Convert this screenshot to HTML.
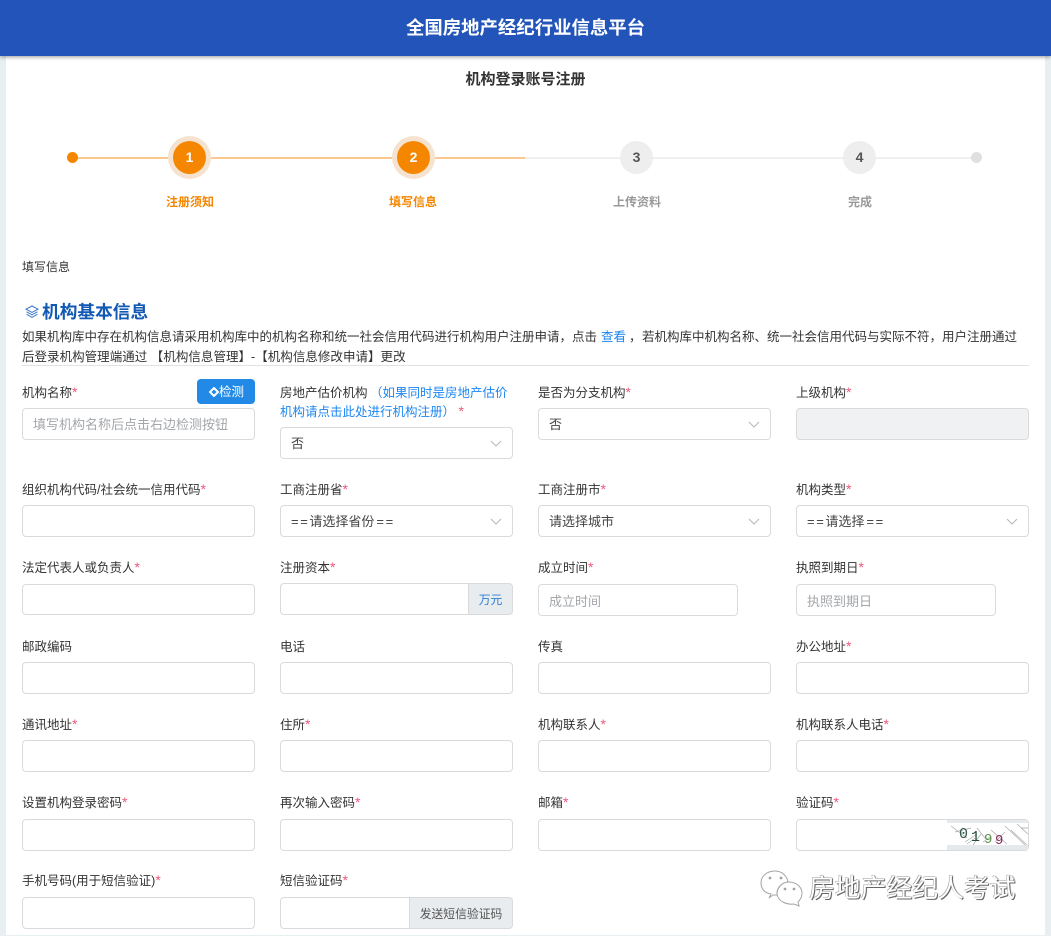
<!DOCTYPE html>
<html lang="zh-CN"><head><meta charset="utf-8"><title>机构登录账号注册</title>
<style>
*{box-sizing:border-box}
html,body{margin:0;padding:0}
body{width:1051px;height:936px;overflow:hidden;position:relative;background:#e8eff2;font-family:"Liberation Sans","Noto Sans CJK SC",sans-serif;color:#333}
.a{position:absolute;white-space:nowrap}
#main{left:6px;top:0;width:1039px;height:935px;background:#fff}
#hdr{left:0;top:0;width:1051px;height:56px;background:#2254b9;box-shadow:0 1px 4px rgba(0,0,0,.4);color:#fff;font-size:18.4px;font-weight:700;text-align:center;line-height:56px}
.l{font-size:12.5px;line-height:16px;color:#333;margin-top:1px}
.l i,.st{color:#f0567a;font-style:normal;font-size:14px;line-height:0}
.i{height:32px;width:233px;background:#fff;border:1px solid #d9dadc;border-radius:4px;font-size:13px;line-height:32px;padding-left:10px;color:#444}
.ph{color:#a3a6aa}
.s svg{position:absolute;right:10px;top:12px}
.c{border-radius:50%}
.n{font-size:14px;font-weight:700;text-align:center}
.t{font-size:12px;font-weight:700;width:80px;text-align:center;line-height:16px}
.on{color:#f58600}.off{color:#999}
.addon{background:#e9ecef;border:1px solid #d9dadc;border-radius:0 4px 4px 0;text-align:center;font-size:11.8px;line-height:32px;height:32px}
.d{font-size:12.5px;line-height:19px;color:#333}
.e{letter-spacing:1.6px}
</style></head><body>
<div class="a" id="main"></div>
<div class="a" id="hdr">全国房地产经纪行业信息平台</div>
<div class="a" style="left:0;top:72px;width:1051px;text-align:center;font-size:15px;font-weight:700;line-height:16px;color:#333">机构登录账号注册</div>

<div class="a" style="left:72px;top:157px;width:453px;height:2px;background:#fbc88f"></div>
<div class="a" style="left:525px;top:157px;width:452px;height:2px;background:#f0f0f0"></div>
<div class="a c" style="left:67px;top:152px;width:11px;height:11px;background:#f58600"></div>
<div class="a c" style="left:971px;top:152px;width:11px;height:11px;background:#e0e0e0"></div>
<div class="a c" style="left:168px;top:136px;width:43px;height:43px;background:#f6e3cf"></div>
<div class="a c n" style="left:173px;top:141px;width:33px;height:33px;background:#f58600;color:#fff;line-height:33px">1</div>
<div class="a c" style="left:392px;top:136px;width:43px;height:43px;background:#f6e3cf"></div>
<div class="a c n" style="left:397px;top:141px;width:33px;height:33px;background:#f58600;color:#fff;line-height:33px">2</div>
<div class="a c n" style="left:620px;top:141px;width:33px;height:33px;background:#eee;color:#555;line-height:33px">3</div>
<div class="a c n" style="left:843px;top:141px;width:33px;height:33px;background:#eee;color:#555;line-height:33px">4</div>
<div class="a t on" style="left:150px;top:194px">注册须知</div>
<div class="a t on" style="left:373px;top:194px">填写信息</div>
<div class="a t off" style="left:597px;top:194px">上传资料</div>
<div class="a t off" style="left:820px;top:194px">完成</div>

<div class="a" style="left:22px;top:259px;font-size:12px;line-height:16px;color:#333">填写信息</div>
<svg class="a" style="left:25px;top:305px" width="14" height="14" viewBox="0 0 14 14" fill="none" stroke="#3f78c9" stroke-width="1"><path d="M7 1 13 4.2 7 7.4 1 4.2Z"/><path d="M1.5 6.8 7 9.8 12.5 6.8"/><path d="M1.5 9.2 7 12.4 12.5 9.2"/></svg>
<div class="a" style="left:42px;top:301px;font-size:17.7px;font-weight:700;line-height:22px;color:#1259b4">机构基本信息</div>
<div class="a d" style="left:22px;top:328px">如果机构库中存在机构信息请采用机构库中的机构名称和统一社会信用代码进行机构用户注册申请，点击</div>
<div class="a d" style="left:601px;top:328px;color:#1a84f0">查看</div>
<div class="a d" style="left:629px;top:328px">，</div>
<div class="a d" style="left:642px;top:328px">若机构库中机构名称、统一社会信用代码与实际不符，用户注册通过</div>
<div class="a d" style="left:22px;top:348px;letter-spacing:.03px">后登录机构管理端通过 【机构信息管理】-【机构信息修改申请】更改</div>
<div class="a" style="left:22px;top:365px;width:1007px;height:1px;background:#e2e2e2"></div>

<!-- row 1 -->
<div class="a l" style="left:22px;top:384px">机构名称<i>*</i></div>
<div class="a" style="left:197px;top:379px;width:58px;height:25px;background:#228ae6;border-radius:4px;color:#fff;font-size:12.5px;line-height:26px;padding-left:12px"><svg style="position:absolute;left:12px;top:8px" width="10" height="10" viewBox="0 0 10 10" fill="none" stroke="#fff" stroke-width="2"><path d="M5 1 9 5 5 9 1 5Z"/></svg><span style="margin-left:10px">检测</span></div>
<div class="a i ph" style="left:22px;top:408px">填写机构名称后点击右边检测按钮</div>
<div class="a l" style="left:280px;top:384px">房地产估价机构 <span style="color:#1c86f2;margin-left:-1px">（如果同时是房地产估价</span></div>
<div class="a l" style="left:280px;top:403px"><span style="color:#1c86f2">机构请点击此处进行机构注册）</span> <i>*</i></div>
<div class="a i s" style="left:280px;top:427px">否<svg width="12" height="7" viewBox="0 0 12 7" fill="none" stroke="#b5b7ba" stroke-width="1"><path d="M1 1 6 6 11 1"/></svg></div>
<div class="a l" style="left:538px;top:384px">是否为分支机构<i>*</i></div>
<div class="a i s" style="left:538px;top:408px">否<svg width="12" height="7" viewBox="0 0 12 7" fill="none" stroke="#b5b7ba" stroke-width="1"><path d="M1 1 6 6 11 1"/></svg></div>
<div class="a l" style="left:796px;top:384px">上级机构<i>*</i></div>
<div class="a i" style="left:796px;top:408px;background:#f0f1f3"></div>

<!-- row 2 -->
<div class="a l" style="left:22px;top:481px">组织机构代码/社会统一信用代码<i>*</i></div>
<div class="a i" style="left:22px;top:505px"></div>
<div class="a l" style="left:280px;top:481px">工商注册省<i>*</i></div>
<div class="a i s" style="left:280px;top:505px"><span class="e">==</span>请选择省份<span class="e" style="margin-left:2px">==</span><svg width="12" height="7" viewBox="0 0 12 7" fill="none" stroke="#b5b7ba" stroke-width="1"><path d="M1 1 6 6 11 1"/></svg></div>
<div class="a l" style="left:538px;top:481px">工商注册市<i>*</i></div>
<div class="a i s" style="left:538px;top:505px">请选择城市<svg width="12" height="7" viewBox="0 0 12 7" fill="none" stroke="#b5b7ba" stroke-width="1"><path d="M1 1 6 6 11 1"/></svg></div>
<div class="a l" style="left:796px;top:481px">机构类型<i>*</i></div>
<div class="a i s" style="left:796px;top:505px"><span class="e">==</span>请选择<span class="e" style="margin-left:2px">==</span><svg width="12" height="7" viewBox="0 0 12 7" fill="none" stroke="#b5b7ba" stroke-width="1"><path d="M1 1 6 6 11 1"/></svg></div>

<!-- row 3 -->
<div class="a l" style="left:22px;top:559px">法定代表人或负责人<i>*</i></div>
<div class="a i" style="left:22px;top:584px;height:31px"></div>
<div class="a l" style="left:280px;top:559px">注册资本<i>*</i></div>
<div class="a i" style="left:280px;top:583px;width:189px;border-radius:4px 0 0 4px"></div>
<div class="a addon" style="left:468px;top:583px;width:45px;color:#2a7fd8">万元</div>
<div class="a l" style="left:538px;top:559px">成立时间<i>*</i></div>
<div class="a i ph" style="left:538px;top:584px;width:200px;line-height:33px">成立时间</div>
<div class="a l" style="left:796px;top:559px">执照到期日<i>*</i></div>
<div class="a i ph" style="left:796px;top:584px;width:200px;line-height:33px">执照到期日</div>

<!-- row 4 -->
<div class="a l" style="left:22px;top:638px">邮政编码</div>
<div class="a i" style="left:22px;top:662px"></div>
<div class="a l" style="left:280px;top:638px">电话</div>
<div class="a i" style="left:280px;top:662px"></div>
<div class="a l" style="left:538px;top:638px">传真</div>
<div class="a i" style="left:538px;top:662px"></div>
<div class="a l" style="left:796px;top:638px">办公地址<i>*</i></div>
<div class="a i" style="left:796px;top:662px"></div>

<!-- row 5 -->
<div class="a l" style="left:22px;top:716px">通讯地址<i>*</i></div>
<div class="a i" style="left:22px;top:740px"></div>
<div class="a l" style="left:280px;top:716px">住所<i>*</i></div>
<div class="a i" style="left:280px;top:740px"></div>
<div class="a l" style="left:538px;top:716px">机构联系人<i>*</i></div>
<div class="a i" style="left:538px;top:740px"></div>
<div class="a l" style="left:796px;top:716px">机构联系人电话<i>*</i></div>
<div class="a i" style="left:796px;top:740px"></div>

<!-- row 6 -->
<div class="a l" style="left:22px;top:794px">设置机构登录密码<i>*</i></div>
<div class="a i" style="left:22px;top:819px"></div>
<div class="a l" style="left:280px;top:794px">再次输入密码<i>*</i></div>
<div class="a i" style="left:280px;top:819px"></div>
<div class="a l" style="left:538px;top:794px">邮箱<i>*</i></div>
<div class="a i" style="left:538px;top:819px"></div>
<div class="a l" style="left:796px;top:794px">验证码<i>*</i></div>
<div class="a i" style="left:796px;top:819px"></div>
<svg class="a" style="left:947px;top:820px" width="81" height="30" viewBox="0 0 81 30">
<rect width="81" height="30" fill="#e6e9ec"/><rect y="3" width="81" height="22" fill="#fff"/>
<g stroke="#a4a9a6" stroke-width=".7" fill="none"><path d="M4 6 20 18M8 12 24 8M18 22 30 14M26 25 34 14M44 10 60 24M48 22 58 12M58 6 78 25M64 10 80 25M70 4 81 14M74 8 81 8M20 24 28 18M36 22 44 16M30 8 38 18"/></g>
<text x="12" y="18" font-family="Liberation Mono,monospace" font-size="15" fill="#2e5a45">0</text>
<text x="24" y="21" font-family="Liberation Mono,monospace" font-size="15" fill="#254a3a">1</text>
<text x="37" y="23" font-family="Liberation Mono,monospace" font-size="14" fill="#5d8f4d">9</text>
<text x="48" y="24" font-family="Liberation Mono,monospace" font-size="14" fill="#8a2a5a">9</text>
</svg>

<!-- row 7 -->
<div class="a l" style="left:22px;top:872px">手机号码(用于短信验证)<i>*</i></div>
<div class="a i" style="left:22px;top:897px"></div>
<div class="a l" style="left:280px;top:872px">短信验证码<i>*</i></div>
<div class="a i" style="left:280px;top:897px;width:130px;border-radius:4px 0 0 4px"></div>
<div class="a addon" style="left:409px;top:897px;width:104px;color:#555">发送短信验证码</div>

<!-- watermark -->
<svg class="a" style="left:758px;top:870px" width="46" height="38" viewBox="0 0 46 38" fill="#fff" stroke="#a5a5a5" stroke-width="1"><path d="M13 24C6 23 3 18 3 13 3 6 9 1 17 1 24 1 29 6 30 12 24 13 19 17 19 23L19 25 15 25 11 28Z"/><path d="M31 12C38 12 44 17 44 23 44 27 42 30 40 32L41 36 36 34C30 35 20 32 19 24 19 17 25 12 31 12Z"/><circle cx="12" cy="8" r=".9" fill="#888"/><circle cx="23" cy="8" r=".9" fill="#888"/><circle cx="27" cy="19" r=".9" fill="#888"/><circle cx="36" cy="19" r=".9" fill="#888"/></svg>
<div class="a" style="left:809px;top:874px;font-size:25.8px;line-height:30px;color:#fff;text-shadow:1px 1px 0 #666,-.5px -.5px 0 #999,1px 0 1px #888">房地产经纪人考试</div>
</body></html>
